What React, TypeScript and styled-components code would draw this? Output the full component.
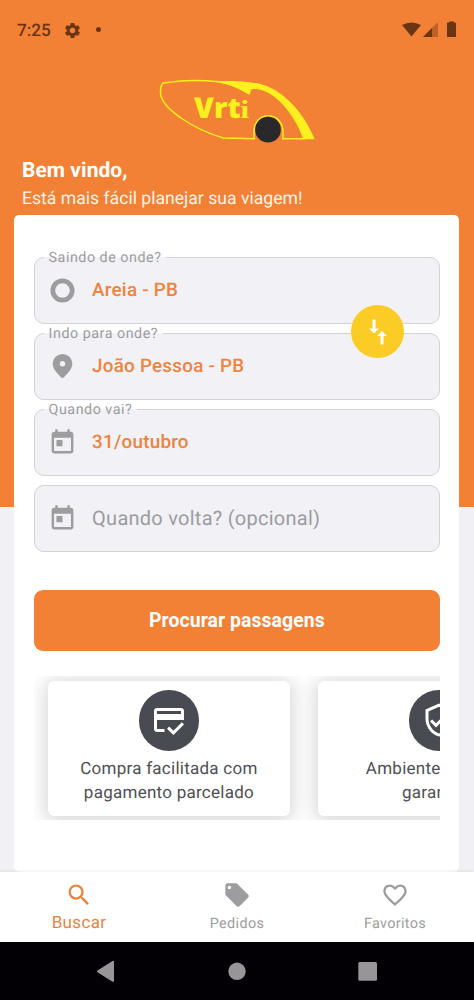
import React from "react";
import styled, { createGlobalStyle } from "styled-components";
import {
  MdFavoriteBorder,
  MdLocalOffer,
  MdOutlineCreditScore,
  MdOutlineVerifiedUser,
  MdSearch,
  MdSettings,
  MdToday,
  MdTripOrigin,
} from "react-icons/md";

const ORANGE = "#f28135";
const GREY = "#9d9c9f";

const GlobalStyle = createGlobalStyle`
  * { box-sizing: border-box; }
  body {
    margin: 0;
    font-family: Roboto, sans-serif;
    text-rendering: geometricPrecision;
    background: #f0f0f5;
  }
`;

const Screen = styled.div`
  width: 474px;
  height: 1000px;
  display: flex;
  flex-direction: column;
  overflow: hidden;
  background: linear-gradient(${ORANGE} 507px, #f0f0f5 507px);
`;

const StatusBar = styled.header`
  flex: none;
  height: 60px;
  padding: 0 16px 0 17px;
  display: flex;
  align-items: center;
  justify-content: space-between;
  color: #6b3513;
`;

const StatusGroup = styled.div<{ $gap: number }>`
  display: flex;
  align-items: center;
  gap: ${(p) => p.$gap}px;
`;

const Clock = styled.span`
  padding-top: 2px;
  font-size: 17.2px;
  font-weight: 500;
  line-height: 20px;
`;

const Dot = styled.span`
  width: 5px;
  height: 5px;
  margin: -2px 0 0 2px;
  border-radius: 50%;
  background: currentColor;
`;

const Logo = styled.svg`
  flex: none;
  width: 180px;
  height: 80px;
  margin: 10px 0 0 150px;
`;

const Greeting = styled.h1`
  flex: none;
  margin: 8px 0 0 22px;
  font-size: 21px;
  font-weight: 700;
  line-height: 26px;
  letter-spacing: 0.05px;
  color: #fff;
`;

const Tagline = styled.p`
  flex: none;
  margin: 3px 0 4px 22px;
  font-size: 17.6px;
  line-height: 24px;
  color: #fff3e8;
`;

const Panel = styled.main`
  flex: none;
  height: 657px;
  margin: 0 14.6px 0 14.4px;
  padding: 42px 19.2px 0;
  border-radius: 5px 5px 6px 6px;
  background: #fff;
`;

const Fields = styled.div`
  position: relative;
  display: flex;
  flex-direction: column;
  gap: 9px;
`;

const Field = styled.div`
  position: relative;
  height: 67px;
  padding: 0 0 1px 13px;
  display: flex;
  align-items: center;
  gap: 15.5px;
  border: 1px solid #d3d3d6;
  border-radius: 10px;
  background: #f1f1f6;
  color: ${GREY};
`;

const FieldLabel = styled.span`
  position: absolute;
  left: 9px;
  top: -9px;
  padding: 0 5px;
  font-size: 14.3px;
  line-height: 19px;
  letter-spacing: 0.52px;
  white-space: nowrap;
  background: linear-gradient(#fff 8px, #f1f1f6 8px);
`;

const FieldValue = styled.span<{ $empty?: boolean }>`
  margin-top: -1px;
  font-size: ${(p) => (p.$empty ? 20 : 18.8)}px;
  font-weight: ${(p) => (p.$empty ? 400 : 500)};
  letter-spacing: 0.26px;
  line-height: 24px;
  color: ${(p) => (p.$empty ? GREY : "#ee8340")};
`;

const SwapButton = styled.button`
  position: absolute;
  right: 36px;
  top: 48px;
  width: 53.4px;
  height: 53.4px;
  padding: 0;
  border: 0;
  border-radius: 50%;
  background: #fbcb26;
`;

const SearchButton = styled.button`
  display: block;
  width: 100%;
  height: 61px;
  margin-top: 38px;
  padding: 0;
  border: 0;
  border-radius: 9px;
  background: ${ORANGE};
  color: #fff;
  font: 700 19.4px/24px Roboto, sans-serif;
  letter-spacing: 0.08px;
`;

const Carousel = styled.section`
  height: 144.4px;
  margin-top: 25px;
  padding: 5px 14.5px;
  display: flex;
  gap: 28.5px;
  overflow: hidden;
`;

const Benefit = styled.article`
  flex: none;
  width: 241.7px;
  height: 135px;
  padding-top: 9px;
  display: flex;
  flex-direction: column;
  align-items: center;
  border-radius: 6px;
  background: #fff;
  box-shadow: 0 2px 18px 3px rgba(60, 45, 60, 0.2);
`;

const BenefitIcon = styled.div`
  width: 60.5px;
  height: 60.5px;
  display: flex;
  align-items: center;
  justify-content: center;
  border-radius: 50%;
  background: #484b52;
  color: #fff;
`;

const BenefitText = styled.p`
  margin: 6px 0 0;
  text-align: center;
  white-space: nowrap;
  font-size: 17px;
  line-height: 24px;
  letter-spacing: 0.26px;
  color: #4e4f52;
`;

const TabBar = styled.nav`
  flex: none;
  height: 70px;
  display: grid;
  grid-template-columns: repeat(3, 1fr);
  background: #fff;
  box-shadow: 0 -1px 3px rgba(0, 0, 0, 0.07);
`;

const Tab = styled.a<{ $active?: boolean }>`
  padding-top: 9px;
  display: flex;
  flex-direction: column;
  align-items: center;
  gap: ${(p) => (p.$active ? 0.5 : 4)}px;
  font-size: ${(p) => (p.$active ? 17 : 14.4)}px;
  line-height: ${(p) => (p.$active ? 26 : 21)}px;
  letter-spacing: 0.35px;
  color: ${(p) => (p.$active ? "#e8833f" : GREY)};
`;

const SystemBar = styled.footer`
  flex: none;
  height: 58px;
  background: #020004;
`;

function PinIcon() {
  return (
    <svg width="29" height="28" viewBox="-.5 0 29 28" fill="currentColor">
      <path
        fillRule="evenodd"
        d="M14 2A9.800 9.800 0 0 1 23.800 11.800C23.800 17.200 19 21.500 15.500 25.300Q14 26.700 12.500 25.300C9 21.500 4.200 17.200 4.200 11.800A9.800 9.800 0 0 1 14 2ZM14 9A2.700 2.700 0 0 0 14 14.400A2.700 2.700 0 0 0 14 9Z"
      />
    </svg>
  );
}

export default function App() {
  return (
    <Screen>
      <GlobalStyle />
      <StatusBar>
        <StatusGroup $gap={12}>
          <Clock>7:25</Clock>
          <MdSettings size={19} />
          <Dot />
        </StatusGroup>
        <svg width="56" height="18" viewBox="0 0 56 18" fill="currentColor">
          <path d="M0 4Q9.500-1 19 4L9.500 15.500Z" />
          <path d="M36 1V16H21Z" opacity=".4" />
          <path d="M30 7V16H21Z" />
          <path d="M45 2.500Q45 1.500 46 1.500H47V.5H52V1.500H53Q54 1.500 54 2.500V16H45Z" />
        </svg>
      </StatusBar>

      <Logo viewBox="0 0 540 240">
        <path
          d="M39 39Q28 52 33 78C45 120 130 178 220 204L313 206C306 165 325 137 355 137S405 165 398 206L465 206"
          fill="none"
          stroke="#fdf01e"
          strokeWidth="4.500"
        />
        <path
          d="M38 40C90 30 155 30 205 35C245 42 275 57 299 72"
          fill="none"
          stroke="#fdf01e"
          strokeWidth="4.500"
        />
        <path
          d="M190 33C255 33 310 33 350 48C410 72 465 135 494 208H460C440 150 400 95 357 70C335 58 310 54 303 60L299 74C275 58 245 44 190 33Z"
          fill="#fdf01e"
        />
        <circle cx="354" cy="179" r="38.500" fill="#29292b" />
        <text x="132" y="144" textLength="140" lengthAdjust="spacingAndGlyphs" fill="#fdf01e" fontFamily="Open Sans" fontWeight="800" fontSize="86">Vrt</text>
        <text x="271" y="143" textLength="27" lengthAdjust="spacingAndGlyphs" fill="#fdf01e" fontFamily="Liberation Serif" fontWeight="700" fontSize="78">i</text>
      </Logo>

      <Greeting>Bem vindo,</Greeting>
      <Tagline>Está mais fácil planejar sua viagem!</Tagline>

      <Panel>
        <Fields>
          <Field>
            <FieldLabel>Saindo de onde?</FieldLabel>
            <MdTripOrigin size={29} />
            <FieldValue>Areia - PB</FieldValue>
          </Field>
          <Field>
            <FieldLabel>Indo para onde?</FieldLabel>
            <PinIcon />
            <FieldValue>João Pessoa - PB</FieldValue>
          </Field>
          <Field>
            <FieldLabel>Quando vai?</FieldLabel>
            <MdToday size={29} />
            <FieldValue>31/outubro</FieldValue>
          </Field>
          <Field>
            <MdToday size={29} />
            <FieldValue $empty>Quando volta? (opcional)</FieldValue>
          </Field>
          <SwapButton aria-label="Inverter">
            <svg width="54" height="54" viewBox="0 0 54 54" fill="#fff">
              <path d="M21.500 14.500H24.500V23.500H28L23 28.500L18 23.500H21.500Z" />
              <path d="M29.500 39.500H32.500V31H36L31 26L26 31H29.500Z" />
            </svg>
          </SwapButton>
        </Fields>

        <SearchButton>Procurar passagens</SearchButton>

        <Carousel>
          <Benefit>
            <BenefitIcon>
              <MdOutlineCreditScore size={36} />
            </BenefitIcon>
            <BenefitText>
              Compra facilitada com
              <br />
              pagamento parcelado
            </BenefitText>
          </Benefit>
          <Benefit>
            <BenefitIcon>
              <MdOutlineVerifiedUser size={36} />
            </BenefitIcon>
            <BenefitText>
              Ambiente seguro e
              <br />
              garantido
            </BenefitText>
          </Benefit>
        </Carousel>
      </Panel>

      <TabBar>
        <Tab $active>
          <MdSearch size={28} />
          Buscar
        </Tab>
        <Tab>
          <MdLocalOffer size={28} />
          Pedidos
        </Tab>
        <Tab>
          <MdFavoriteBorder size={28} />
          Favoritos
        </Tab>
      </TabBar>

      <SystemBar>
        <svg width="474" height="58" viewBox="0 0 474 58" fill="#989599">
          <path d="M113 20V39L98 29.500Z" stroke="#989599" strokeWidth="2" strokeLinejoin="round" transform="translate(0 -.2)" />
          <circle cx="237" cy="29.300" r="8.700" />
          <rect x="358.300" y="20" width="18.700" height="18.700" rx="1.500" />
        </svg>
      </SystemBar>
    </Screen>
  );
}
